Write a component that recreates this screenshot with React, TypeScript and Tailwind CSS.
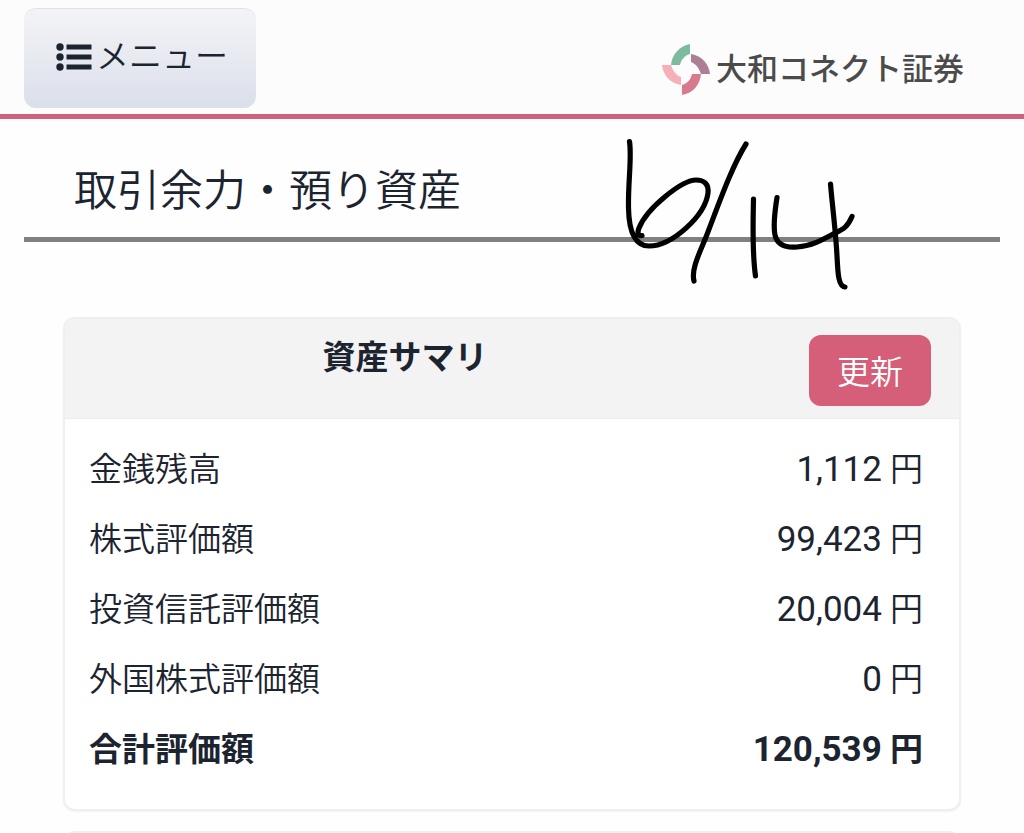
import React from 'react';

type Row = { label: string; value: string; total?: boolean };

const rows: Row[] = [
  { label: '金銭残高', value: '1,112' },
  { label: '株式評価額', value: '99,423' },
  { label: '投資信託評価額', value: '20,004' },
  { label: '外国株式評価額', value: '0' },
  { label: '合計評価額', value: '120,539', total: true },
];

const ListIcon = () => (
  <svg className="w-9 h-7 shrink-0" viewBox="0 0 36 28" fill="currentColor" aria-hidden="true">
    <circle cx="4" cy="4" r="3.7" />
    <circle cx="4" cy="14" r="3.7" />
    <circle cx="4" cy="24" r="3.7" />
    <rect x="10.5" y="1.5" width="25" height="5" />
    <rect x="10.5" y="11.5" width="25" height="5" />
    <rect x="10.5" y="21.5" width="25" height="5" />
  </svg>
);

const LogoMark = () => (
  <svg className="w-12 h-[52px]" viewBox="0 0 48 52" aria-hidden="true">
    <path d="M28 0V10C22 12 19 16 18 21H9C10 10 18 2 28 0Z" fill="#7dba9f" />
    <path d="M29 10C40 12 47 20 48 30H39C37 24 34 20 29 18Z" fill="#ac7f94" />
    <path d="M39 30C38 41 31 49 20 51V41C26 39 29 35 30 30Z" fill="#d9798e" />
    <path d="M19 41C8 39 1 31 0 21H9C11 27 14 31 19 33Z" fill="#f7b0b7" />
  </svg>
);

// Handwritten date over the page title
const DateMemo = () => (
  <svg
    className="absolute left-[600px] top-px w-[280px] h-[180px] pointer-events-none"
    viewBox="0 0 280 180"
    fill="none"
    stroke="#000"
    strokeWidth="5.2"
    strokeLinecap="round"
    strokeLinejoin="round"
    role="img"
    aria-label="6/14"
  >
    <path d="M29.5 21.5C32 38 28 60 28.5 88C29 113 35 126 49 126C72 126 105 96 108 73C109 64 104 60 96 60C82 60 47 88 39 108C37 113 38 116 42 115.5" />
    <path d="M146 24C131 48 118 86 106 117C99 134 91 150 94 161" />
    <path d="M153.5 79C153 105 152 132 155.5 156" />
    <path d="M177 77.5C175 90 173 105 175 115C177 124 185 128 197 127C212 126 224 119 235 113C244 109 248 106 252 96.5" />
    <path d="M230.5 64C232 82 235 106 236.5 128C238 148 237 166 245 167" />
  </svg>
);

const App: React.FC = () => {
  return (
    <div className="min-h-screen bg-[#fefefe] text-[#1c2430] font-['Roboto','Noto_Sans_CJK_JP',sans-serif]">
      <header className="flex items-start justify-between border-b-[5px] border-[#d0627f] bg-[#fcfcfd] px-6 pt-2 pb-1.5">
        <button
          type="button"
          className="flex items-center gap-1 h-[100px] pl-8 pr-7 pb-1 rounded-xl border-t border-[#dfe0e8] bg-linear-to-b from-[#f4f4f7] to-[#dbdfea] text-[33px] leading-10"
        >
          <ListIcon />
          <span className="font-[350]">メニュー</span>
        </button>
        <a href="#" className="flex items-center gap-1.5 pt-9 pr-9 text-[31px] leading-[52px] font-medium text-[#4b4b4b]">
          <LogoMark />
          <span>大和コネクト証券</span>
        </a>
      </header>

      <main className="relative px-6">
        <div className="border-b-[5px] border-[#808080] px-[50px] pt-10 pb-3.5">
          <h1 className="text-[43px] leading-[64px] font-[350]">取引余力・預り資産</h1>
        </div>
        <DateMemo />

        <section className="mt-[75px] mx-[39px] rounded-xl border-2 border-[#efeff0] bg-white shadow-xs overflow-hidden">
          <div className="flex items-start gap-16 border-b border-[#ececed] bg-[#f3f3f3] pt-4 pr-7 pb-3">
            <h2 className="flex-1 text-center text-[33px] leading-[46px] font-bold">資産サマリ</h2>
            <button type="button" className="h-[71px] px-7 pt-1 rounded-xl bg-[#d55f78] text-[33px] leading-[44px] font-[350] text-white">
              更新
            </button>
          </div>
          <div className="px-6 pt-4 pb-6">
            <table className="w-full text-[33px] leading-[44px]">
              <tbody>
                {rows.map((row) => (
                  <tr key={row.label} className={`h-[70px] ${row.total ? 'font-bold' : 'font-[350]'}`}>
                    <th scope="row" className={`text-left ${row.total ? 'font-bold' : 'font-[350]'}`}>
                      {row.label}
                    </th>
                    <td className="pr-3 text-right">
                      <span className={`text-[35px] ${row.total ? '' : 'font-normal'}`}>{row.value}</span> 円
                    </td>
                  </tr>
                ))}
              </tbody>
            </table>
          </div>
        </section>

        <section className="mt-5 mx-[39px] h-3 rounded-t-xl border-2 border-b-0 border-[#efeff0] bg-[#f3f3f3]" />
      </main>
    </div>
  );
};

export default App;
